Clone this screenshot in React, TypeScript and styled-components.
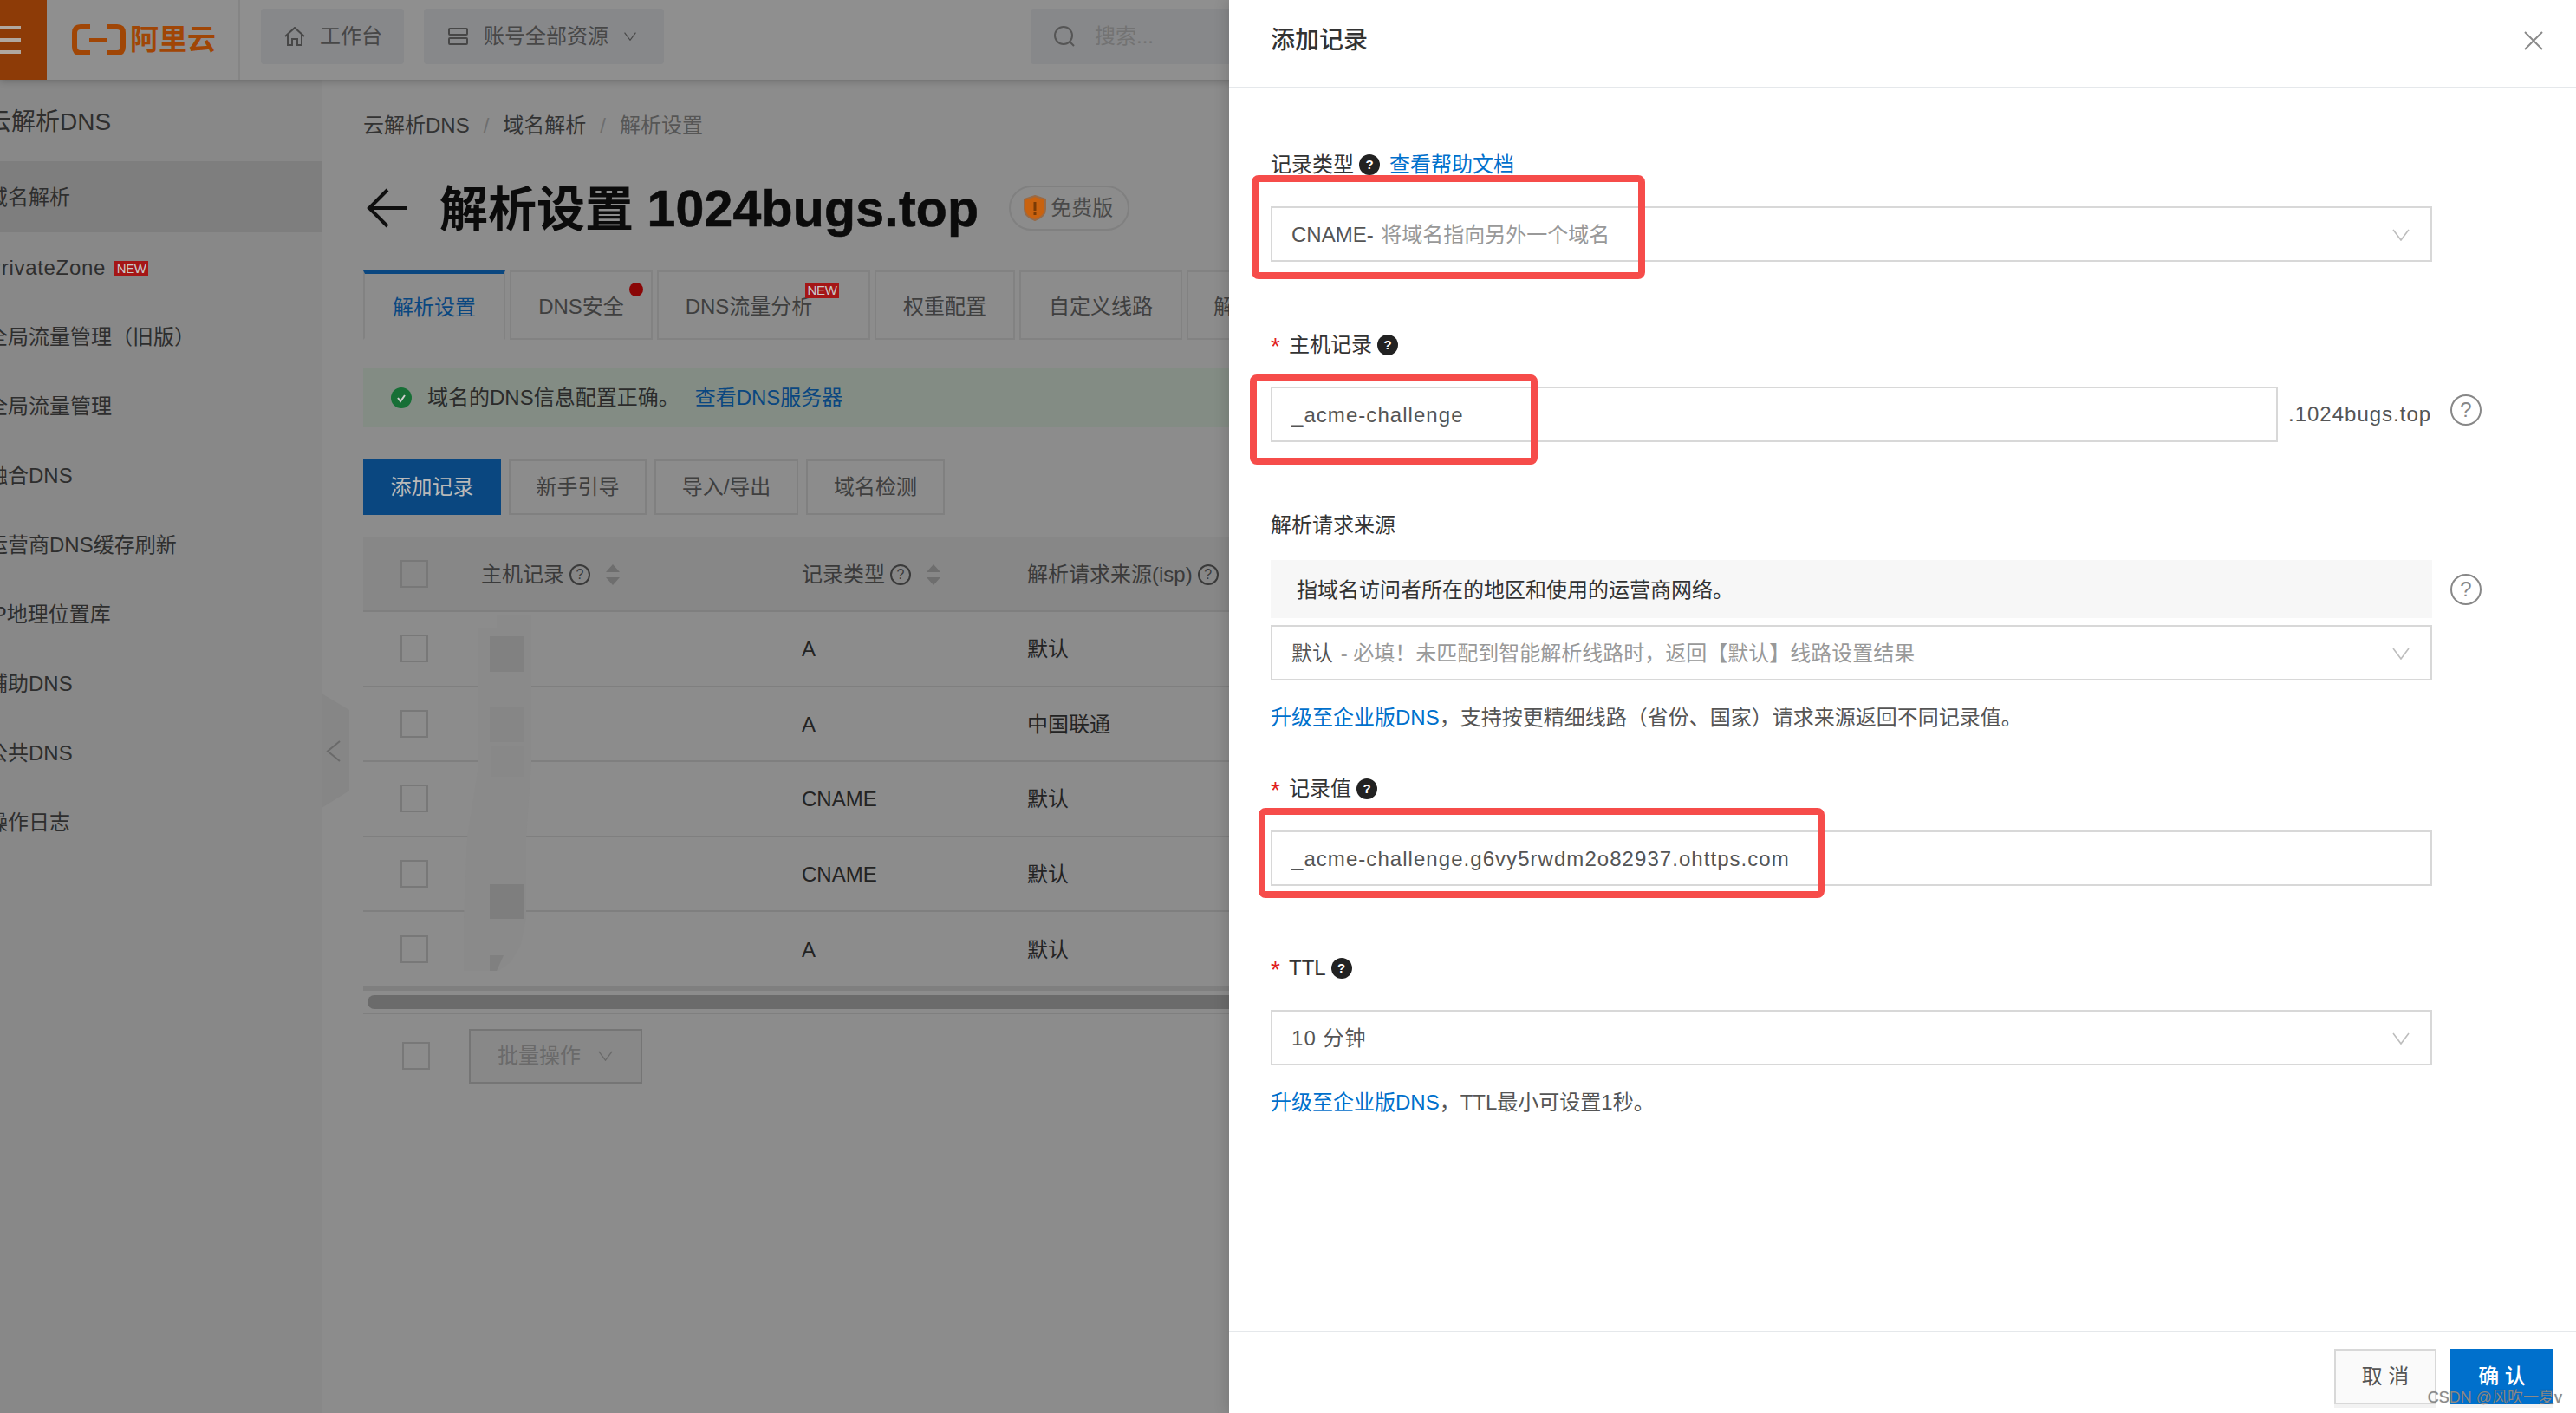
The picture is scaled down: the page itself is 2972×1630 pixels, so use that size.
import React from "react";
import styled, { createGlobalStyle } from "styled-components";

const Global = createGlobalStyle`
  html, body { margin: 0; padding: 0; }
  body { font-family: "Liberation Sans", "Noto Sans CJK SC", sans-serif; font-size: 24px; }
  * { box-sizing: border-box; }
`;

const Page = styled.div`
  position: relative; width: 2972px; height: 1630px; overflow: hidden;
  display: flex; flex-direction: column; background: #8c8c8c; color: #3a3a3a; line-height: 32px;
`;

/* ---------- top bar ---------- */
const TopBar = styled.header`
  position: relative; z-index: 2; height: 92px; flex: none; display: flex; align-items: flex-start;
  background: #8f8f8f; box-shadow: 0 2px 8px rgba(0,0,0,.22);
`;
const Burger = styled.div`
  width: 54px; height: 92px; background: #8d3b07; display: flex; flex-direction: column;
  justify-content: center; gap: 10px;
  i { display: block; width: 24px; height: 4px; background: #b0a8a0; }
`;
const Logo = styled.div`
  width: 223px; height: 92px; padding-left: 29px; display: flex; align-items: center; gap: 5px;
  border-right: 2px solid #858585;
  b { font-size: 33px; font-weight: 700; color: #a04606; line-height: 36px; letter-spacing: 0; }
`;
const NavButton = styled.div<{ $w: number; $ml: number }>`
  width: ${p => p.$w}px; margin: 10px 0 0 ${p => p.$ml}px; height: 64px; border-radius: 4px; background: #87888a;
  display: flex; align-items: center; padding-left: 27px; gap: 17px; color: #474747; white-space: nowrap;
`;
const SearchBox = styled.div`
  margin: 10px 0 0 423px; width: 400px; height: 64px; border-radius: 4px; background: #87888a;
  display: flex; align-items: center; padding-left: 26px; gap: 22px; color: #737373;
`;

/* ---------- body ---------- */
const Body = styled.div`
  flex: 1; display: flex; min-height: 0; position: relative;
`;
const Sidebar = styled.nav`
  width: 371px; flex: none; background: #888888; overflow: hidden; padding-top: 12px; color: #2e2e2e;
`;
const SideTitle = styled.div`
  height: 82px; padding-bottom: 8px; display: flex; align-items: center; margin-left: -15px; font-size: 28px; white-space: nowrap;
`;
const SideItem = styled.div<{ $active?: boolean }>`
  height: ${p => (p.$active ? 82 : 80)}px; display: flex; align-items: center; gap: 10px; padding-top: 2px; white-space: nowrap;
  background: ${p => (p.$active ? "#7e7e7e" : "transparent")};
  span { margin-left: -15px; }
`;
const LatinWide = styled.span`
  letter-spacing: .7px;
`;
const NewTag = styled.em`
  display: inline-block; font-style: normal; width: 39px; height: 17px; background: #a51616; color: #c9c9c9;
  font-size: 15px; line-height: 17px; text-align: center; letter-spacing: -.4px; font-family: "Liberation Sans", sans-serif;
`;
const Collapse = styled.div`
  position: absolute; left: 371px; top: 708px; width: 32px; height: 132px;
  svg { display: block; }
`;

const Main = styled.main`
  flex: 1; min-width: 0; padding: 36px 0 0 48px; overflow: hidden;
`;
const Breadcrumb = styled.div`
  height: 32px; padding-top: 2px; display: flex; align-items: center; gap: 16px; white-space: nowrap; color: #333;
  i { font-style: normal; color: #6e6e6e; }
  span:last-child { color: #565656; }
`;
const TitleRow = styled.div`
  margin-top: 54px; height: 52px; display: flex; align-items: center; padding-left: 4px;
`;
const PageTitle = styled.h1`
  margin: 2px 0 0 37px; font-size: 56px; font-weight: 700; line-height: 52px; color: #0b0b0b; white-space: nowrap;
  span { font-size: 59px; letter-spacing: .2px; -webkit-text-stroke: .6px #0b0b0b; }
`;
const Pill = styled.div`
  margin-left: 35px; width: 139px; height: 52px; border: 2px solid #808080; border-radius: 26px;
  display: flex; align-items: center; gap: 5px; padding-left: 15px; color: #4a4a4a; white-space: nowrap;
`;
const Tabs = styled.div`
  margin-top: 46px; height: 80px; display: flex; gap: 5px; align-items: stretch; white-space: nowrap;
`;
const Tab = styled.div<{ $w: number; $active?: boolean; $pr?: number }>`
  position: relative; flex: none; width: ${p => p.$w}px; display: flex; align-items: center; justify-content: center;
  padding: 4px ${p => p.$pr ?? 0}px 0 0;
  border: 2px solid #828282; border-top-color: ${p => (p.$active ? "#0a4780" : "#828282")};
  border-top-width: ${p => (p.$active ? 4 : 2)}px;
  border-bottom-color: ${p => (p.$active ? "#8c8c8c" : "#828282")};
  color: ${p => (p.$active ? "#0a4780" : "#3f3f3f")};
`;
const RedDot = styled.i`
  position: absolute; right: 9px; top: 12px; width: 16px; height: 16px; border-radius: 50%; background: #8a0606;
`;
const TabNew = styled(NewTag)`
  position: absolute; left: 169px; top: 12px; height: 18px;
`;
const Alert = styled.div`
  margin-top: 32px; height: 69px; background: #838c84; display: flex; align-items: center; padding-left: 32px;
  color: #2b2b2b; white-space: nowrap;
`;
const DarkLink = styled.span`
  margin-left: 18px; color: #0a4780;
`;
const Toolbar = styled.div`
  margin-top: 37px; height: 64px; display: flex; gap: 9px;
`;
const ToolButton = styled.div<{ $w: number; $primary?: boolean }>`
  width: ${p => p.$w}px; display: flex; align-items: center; justify-content: center; white-space: nowrap;
  background: ${p => (p.$primary ? "#0a4780" : "transparent")};
  border: 2px solid ${p => (p.$primary ? "#0a4780" : "#808080")};
  color: ${p => (p.$primary ? "#b9b9b9" : "#3f3f3f")};
`;
const TableWrap = styled.div`
  position: relative; margin-top: 26px;
`;
const Row = styled.div<{ $head?: boolean }>`
  display: grid; grid-template-columns: 136px 370px 260px 1fr; align-items: center;
  height: ${p => (p.$head ? "86px" : "86.6px")};
  background: ${p => (p.$head ? "#878787" : "transparent")};
  border-bottom: 2px solid #7f7f7f; color: ${p => (p.$head ? "#3a3a3a" : "#232323")}; white-space: nowrap;
`;
const CheckCell = styled.div`
  padding-left: 43px; display: flex; align-items: center;
`;
const Check = styled.i`
  display: block; width: 32px; height: 32px; border: 2px solid #787878;
`;
const HeadCell = styled.div`
  display: flex; align-items: center; gap: 6px; padding-top: 2px;
`;
const TextCell = styled.div`
  padding-top: 2px;
`;
const SmallHelp = styled.i`
  flex: none; width: 24px; height: 24px; border: 2px solid #3a3a3a; border-radius: 50%; font-style: normal;
  font-size: 16px; line-height: 20px; text-align: center; color: #3a3a3a;
`;
const Mosaic = styled.svg`
  position: absolute; left: 0; top: 0; width: 220px; height: 520px;
`;
const ScrollTrack = styled.div`
  height: 31px; border-top: 4px solid #7f7f7f; border-bottom: 2px solid #7f7f7f; padding: 5px 0 0 5px;
`;
const ScrollThumb = styled.div`
  height: 16px; border-radius: 8px 0 0 8px; background: #6b6b6b;
`;
const TableFooter = styled.div`
  margin-top: 17px; height: 63px; display: flex; align-items: center; padding-left: 45px;
`;
const BulkButton = styled.div`
  margin-left: 45px; width: 200px; height: 63px; border: 2px solid #757575; display: flex; align-items: center;
  padding-left: 31px; gap: 20px; color: #6a6a6a; background: #888; white-space: nowrap;
`;

/* ---------- drawer ---------- */
const Drawer = styled.aside`
  position: absolute; z-index: 3; right: 0; top: 0; width: 1554px; height: 1630px; background: #fff;
  display: flex; flex-direction: column; box-shadow: -4px 0 14px rgba(0,0,0,.12); color: #333;
`;
const DrawerHead = styled.div`
  height: 102px; flex: none; border-bottom: 2px solid #e5e8eb; display: flex; align-items: center;
  justify-content: space-between; padding: 0 38px 6px 48px;
  h2 { margin: 0; font-size: 28px; font-weight: 500; color: #333; line-height: 32px; }
`;
const DrawerBody = styled.div`
  flex: 1; padding: 71px 0 0 48px;
`;
const FormItem = styled.div<{ $mb?: number }>`
  margin-bottom: ${p => p.$mb ?? 79}px;
`;
const Label = styled.div<{ $mb?: number }>`
  height: 32px; padding-top: 2px; display: flex; align-items: center; margin-bottom: ${p => p.$mb ?? 33}px; color: #333; white-space: nowrap;
`;
const Star = styled.span`
  width: 21px; color: #e0201c; flex: none; font-size: 28px; padding-top: 4px;
`;
const SolidHelp = styled.i`
  width: 24px; height: 24px; margin-left: 6px; border-radius: 50%; background: #222; color: #fff; font-style: normal;
  font-size: 15px; line-height: 24px; text-align: center; font-weight: 700;
`;
const BlueLink = styled.span<{ $ml?: number }>`
  color: #0070cc; margin-left: ${p => p.$ml ?? 0}px;
`;
const ControlRow = styled.div<{ $mt?: number }>`
  position: relative; display: flex; align-items: center; margin-top: ${p => p.$mt ?? 0}px;
`;
const Field = styled.div<{ $w?: number }>`
  width: ${p => p.$w ?? 1340}px; height: 64px; flex: none; border: 2px solid #d8d8d8; display: flex; align-items: center;
  justify-content: space-between; padding: 1px 24px 0 22px; color: #555; white-space: nowrap; letter-spacing: 0;
  background: #fff;
`;
const Mono = styled.span`
  letter-spacing: 1.05px; color: #555;
`;
const Hint = styled.span`
  color: #999; margin-left: 2px;
`;
const Suffix = styled.span`
  width: 166px; margin-left: 12px; letter-spacing: 1px; color: #555; white-space: nowrap;
`;
const OutlineHelp = styled.i<{ $ml: number; $up?: number }>`
  flex: none; width: 36px; height: 36px; margin: ${p => -(p.$up ?? 0)}px 0 0 ${p => p.$ml}px; border: 2px solid #888; border-radius: 50%;
  font-style: normal; font-size: 24px; line-height: 32px; text-align: center; color: #888;
`;
const Tip = styled.div`
  width: 1340px; height: 67px; flex: none; background: #f7f7f7; display: flex; align-items: center; padding: 2px 0 0 30px; color: #333;
`;
const HelpText = styled.div`
  margin-top: 26px; height: 32px; padding-top: 2px; color: #555; white-space: nowrap; display: flex; align-items: center;
`;
const Annotation = styled.div<{ $l: number; $t: number; $w: number; $h: number }>`
  position: absolute; left: ${p => p.$l}px; top: ${p => p.$t}px; width: ${p => p.$w}px; height: ${p => p.$h}px;
  border: 8px solid #f64c4a; border-radius: 8px; pointer-events: none;
`;
const DrawerFoot = styled.div`
  height: 95px; flex: none; border-top: 2px solid #e5e8eb; padding: 19px 26px 0 0; display: flex; justify-content: flex-end; gap: 16px;
`;
const FootButton = styled.div<{ $primary?: boolean }>`
  width: ${p => (p.$primary ? 119 : 118)}px; height: 64px; display: flex; align-items: center; justify-content: center;
  box-shadow: 0 4px 0 #f2f2f2;
  background: ${p => (p.$primary ? "#0070cc" : "#fafafa")};
  border: 2px solid ${p => (p.$primary ? "#0070cc" : "#d8d8d8")};
  color: ${p => (p.$primary ? "#fff" : "#555")};
  font-weight: ${p => (p.$primary ? 500 : 400)};
`;
const Watermark = styled.div`
  position: absolute; z-index: 4; right: 16px; bottom: 6px; font-size: 18px; line-height: 24px; color: #8a8a8a;
  text-shadow: 0 0 1px rgba(0,0,0,.3); white-space: nowrap;
`;

/* ---------- icons ---------- */
const Chevron = ({ c = "#bdbdbd", w = 20, h = 14 }: { c?: string; w?: number; h?: number }) => (
  <svg width={w} height={h} viewBox="0 0 20 14" fill="none"><path d="M1 1l9 12 9-12" stroke={c} strokeWidth="1.6" /></svg>
);
const LogoMark = () => (
  <svg width="62" height="36" viewBox="0 0 62 36" fill="none">
    <path d="M21 3H10Q3 3 3 10V26Q3 33 10 33H21" stroke="#a04606" strokeWidth="6" />
    <path d="M41 3H52Q59 3 59 10V26Q59 33 52 33H41" stroke="#a04606" strokeWidth="6" />
    <rect x="20" y="16" width="20" height="4" fill="#a04606" />
  </svg>
);
const SortArrows = () => (
  <svg width="16" height="24" viewBox="0 0 16 24" style={{ marginLeft: 12 }}><path d="M8 0l8 9H0zM8 24L0 15h16z" fill="#6e6e6e" /></svg>
);

const rows = [["A", "默认"], ["A", "中国联通"], ["CNAME", "默认"], ["CNAME", "默认"], ["A", "默认"]];
const sideItems = ["全局流量管理（旧版）", "全局流量管理", "融合DNS", "运营商DNS缓存刷新", "IP地理位置库", "辅助DNS", "公共DNS", "操作日志"];

export default function App() {
  return (
    <Page>
      <Global />
      <TopBar>
        <Burger><i /><i /><i /></Burger>
        <Logo><LogoMark /><b>阿里云</b></Logo>
        <NavButton $w={165} $ml={24}>
          <svg width="24" height="22" viewBox="0 0 24 22" fill="none" stroke="#474747" strokeWidth="2"><path d="M1 11L12 1l11 10M4 9v12h5v-7h6v7h5V9" /></svg>
          <span>工作台</span>
        </NavButton>
        <NavButton $w={277} $ml={23}>
          <svg width="25" height="22" viewBox="0 0 25 22" fill="none" stroke="#474747" strokeWidth="2"><rect x="2" y="2" width="21" height="7" rx="1" /><rect x="2" y="13" width="21" height="7" rx="1" /></svg>
          <span>账号全部资源</span>
          <Chevron c="#474747" w={16} h={10} />
        </NavButton>
        <SearchBox>
          <svg width="26" height="26" viewBox="0 0 26 26" fill="none" stroke="#555" strokeWidth="2"><circle cx="12" cy="12" r="10" /><path d="M19 19l5 5" /></svg>
          <span>搜索...</span>
        </SearchBox>
      </TopBar>

      <Body>
        <Sidebar>
          <SideTitle>云解析DNS</SideTitle>
          <SideItem $active><span>域名解析</span></SideItem>
          <SideItem><LatinWide>PrivateZone</LatinWide><NewTag>NEW</NewTag></SideItem>
          {sideItems.map(s => <SideItem key={s}><span>{s}</span></SideItem>)}
        </Sidebar>
        <Collapse>
          <svg width="32" height="132" viewBox="0 0 32 132">
            <path d="M0 0L32 19V112L0 132z" fill="#868686" />
            <path d="M21 55L7 66.5 21 78" fill="none" stroke="#6a6a6a" strokeWidth="2" />
          </svg>
        </Collapse>
        <Main>
          <Breadcrumb><span>云解析DNS</span><i>/</i><span>域名解析</span><i>/</i><span>解析设置</span></Breadcrumb>
          <TitleRow>
            <svg width="47" height="46" viewBox="0 0 47 46" fill="none" stroke="#0f0f0f" strokeWidth="4"><path d="M24 2L3 23l21 21M3 23h44" /></svg>
            <PageTitle>解析设置 <span>1024bugs.top</span></PageTitle>
            <Pill>
              <svg width="26" height="30" viewBox="0 0 26 30"><path d="M13 1l12 4v11c0 7-6 11-12 13C7 27 1 23 1 16V5z" fill="#c9620f" stroke="#9a6a45" strokeWidth="2" /><rect x="11.5" y="8" width="3" height="10" fill="#7a3a05" /><rect x="11.5" y="20" width="3" height="3" fill="#7a3a05" /></svg>
              <span>免费版</span>
            </Pill>
          </TitleRow>
          <Tabs>
            <Tab $w={164} $active>解析设置</Tab>
            <Tab $w={165}>DNS安全<RedDot /></Tab>
            <Tab $w={246} $pr={34}>DNS流量分析<TabNew>NEW</TabNew></Tab>
            <Tab $w={162}>权重配置</Tab>
            <Tab $w={188}>自定义线路</Tab>
            <Tab $w={158}>解析日志</Tab>
          </Tabs>
          <Alert>
            <svg width="24" height="24" viewBox="0 0 24 24" style={{ marginRight: 18 }}><circle cx="12" cy="12" r="12" fill="#176f36" /><path d="M8 12l3 4 5-7" fill="none" stroke="#cfcfcf" strokeWidth="2" /></svg>
            <span>域名的DNS信息配置正确。</span><DarkLink>查看DNS服务器</DarkLink>
          </Alert>
          <Toolbar>
            <ToolButton $w={159} $primary>添加记录</ToolButton>
            <ToolButton $w={159}>新手引导</ToolButton>
            <ToolButton $w={166}>导入/导出</ToolButton>
            <ToolButton $w={160}>域名检测</ToolButton>
          </Toolbar>
          <TableWrap>
            <Row $head>
              <CheckCell><Check /></CheckCell>
              <HeadCell>主机记录<SmallHelp>?</SmallHelp><SortArrows /></HeadCell>
              <HeadCell>记录类型<SmallHelp>?</SmallHelp><SortArrows /></HeadCell>
              <HeadCell>解析请求来源(isp)<SmallHelp>?</SmallHelp></HeadCell>
            </Row>
            {rows.map((r, i) => (
              <Row key={i}>
                <CheckCell><Check /></CheckCell>
                <div />
                <TextCell>{r[0]}</TextCell>
                <TextCell>{r[1]}</TextCell>
              </Row>
            ))}
            <Mosaic viewBox="420 620 220 520">
              <path d="M574 710H614V879L608 966V1060L602 1090L590 1110L576 1120H536V1060L540 966L552 890V724H574Z" fill="#8a8a8a" />
              <rect x="566" y="734" width="40" height="41" fill="#818181" />
              <rect x="566" y="816" width="40" height="40" fill="#868686" />
              <rect x="568" y="860" width="38" height="36" fill="#888888" />
              <rect x="566" y="1020" width="40" height="40" fill="#7e7e7e" />
              <path d="M566 1102h16l-8 18h-8z" fill="#808080" />
            </Mosaic>
            <ScrollTrack><ScrollThumb /></ScrollTrack>
            <TableFooter>
              <Check />
              <BulkButton>批量操作<Chevron c="#6a6a6a" w={17} h={12} /></BulkButton>
            </TableFooter>
          </TableWrap>
        </Main>
      </Body>

      <Drawer>
        <DrawerHead>
          <h2>添加记录</h2>
          <svg width="22" height="22" viewBox="0 0 22 22" fill="none" stroke="#8a8a8a" strokeWidth="2"><path d="M1 1l20 20M21 1L1 21" /></svg>
        </DrawerHead>
        <DrawerBody>
          <FormItem>
            <Label>记录类型<SolidHelp>?</SolidHelp><BlueLink $ml={11}>查看帮助文档</BlueLink></Label>
            <ControlRow>
              <Field><span>CNAME- <Hint>将域名指向另外一个域名</Hint></span><Chevron /></Field>
              <Annotation $l={-22} $t={-36} $w={454} $h={120} />
            </ControlRow>
          </FormItem>
          <FormItem>
            <Label><Star>*</Star>主机记录<SolidHelp>?</SolidHelp></Label>
            <ControlRow>
              <Field $w={1162}><Mono>_acme-challenge</Mono></Field>
              <Suffix>.1024bugs.top</Suffix>
              <OutlineHelp $ml={21} $up={10}>?</OutlineHelp>
              <Annotation $l={-24} $t={-14} $w={332} $h={104} />
            </ControlRow>
          </FormItem>
          <FormItem $mb={50}>
            <Label $mb={25}>解析请求来源</Label>
            <ControlRow>
              <Tip>指域名访问者所在的地区和使用的运营商网络。</Tip>
              <OutlineHelp $ml={21}>?</OutlineHelp>
            </ControlRow>
            <ControlRow $mt={8}>
              <Field><span>默认<Hint> - 必填！未匹配到智能解析线路时，返回【默认】线路设置结果</Hint></span><Chevron /></Field>
            </ControlRow>
            <HelpText><BlueLink>升级至企业版DNS</BlueLink>，支持按更精细线路（省份、国家）请求来源返回不同记录值。</HelpText>
          </FormItem>
          <FormItem $mb={78}>
            <Label><Star>*</Star>记录值<SolidHelp>?</SolidHelp></Label>
            <ControlRow>
              <Field><Mono>_acme-challenge.g6vy5rwdm2o82937.ohttps.com</Mono></Field>
              <Annotation $l={-14} $t={-26} $w={653} $h={104} />
            </ControlRow>
          </FormItem>
          <FormItem>
            <Label><Star>*</Star>TTL<SolidHelp>?</SolidHelp></Label>
            <ControlRow>
              <Field><Mono>10 分钟</Mono><Chevron /></Field>
            </ControlRow>
            <HelpText><BlueLink>升级至企业版DNS</BlueLink>，TTL最小可设置1秒。</HelpText>
          </FormItem>
        </DrawerBody>
        <DrawerFoot>
          <FootButton>取 消</FootButton>
          <FootButton $primary>确 认</FootButton>
        </DrawerFoot>
      </Drawer>
      <Watermark>CSDN @风吹一夏v</Watermark>
    </Page>
  );
}
